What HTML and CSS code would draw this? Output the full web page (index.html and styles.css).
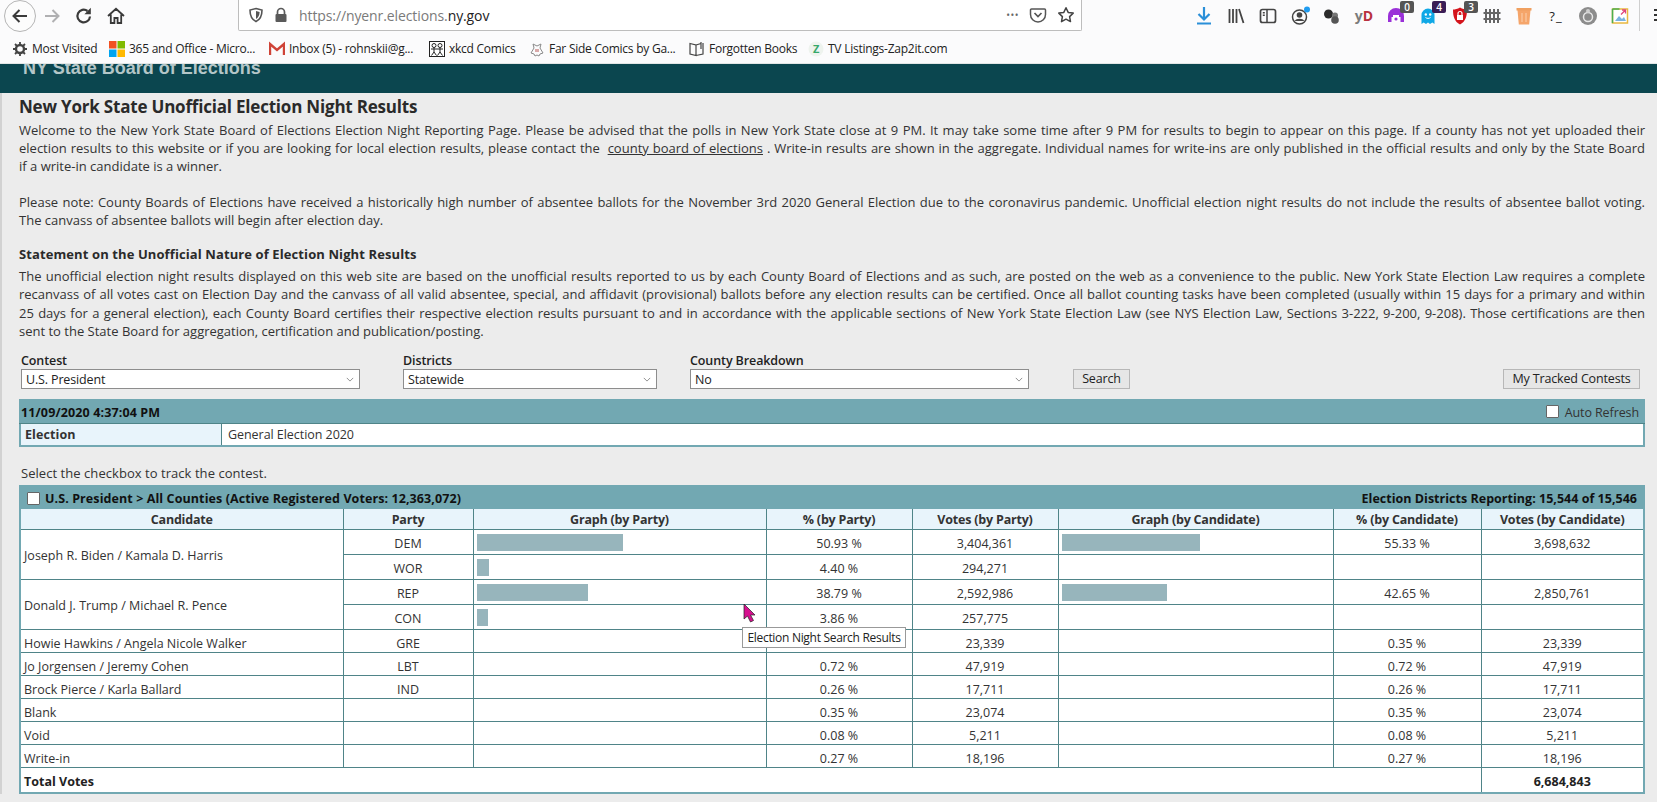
FILE: index.html
```html
<!DOCTYPE html>
<html lang="en">
<head>
<meta charset="utf-8">
<title>Election Night Search Results</title>
<link rel="stylesheet" href="styles.css">
</head>
<body>
<header class="chrome">
  <div class="toolbar">
    <button class="nav back"><svg viewBox="0 0 20 20" width="20" height="20"><path d="M17 10H4M9.5 4 3.5 10l6 6" fill="none" stroke="#3a3a3a" stroke-width="2"/></svg></button>
    <button class="nav"><svg viewBox="0 0 20 20" width="20" height="20"><path d="M3 10h13M10.500 4l6 6-6 6" fill="none" stroke="#b0b0b2" stroke-width="2"/></svg></button>
    <button class="nav"><svg viewBox="0 0 20 20" width="20" height="20"><path d="M16 10.500A6.300 6.300 0 1 1 13.500 5" fill="none" stroke="#3a3a3a" stroke-width="2.200"/><path d="M16.800 1.800v6.400h-6.400z" fill="#3a3a3a"/></svg></button>
    <button class="nav"><svg viewBox="0 0 20 20" width="20" height="20"><path d="M2 10 10 2.800 18 10M4.800 8.500V17h3.600v-5h3.200v5h3.600V8.500" fill="none" stroke="#3a3a3a" stroke-width="1.800"/></svg></button>
    <div class="urlbar">
      <svg class="shield" viewBox="0 0 16 16" width="16" height="16"><path d="M8 1.500 14 3c0 6-1.500 9.500-6 11.500C3.500 12.500 2 9 2 3z" fill="none" stroke="#555" stroke-width="1.600"/><path d="M8 4v8c2.500-1.500 3.500-4 3.600-7z" fill="#555"/></svg>
      <svg class="lock" viewBox="0 0 16 16" width="16" height="16"><path d="M4.500 7V5a3.500 3.500 0 0 1 7 0v2" fill="none" stroke="#5a5a5a" stroke-width="1.700"/><rect x="2.500" y="7" width="11" height="8" rx="1" fill="#5a5a5a"/></svg>
      <span class="url">https://nyenr.elections.<b>ny.gov</b></span>
      <span class="dots">•••</span>
      <svg viewBox="0 0 18 18" width="18" height="18"><path d="M2.500 3h13a1 1 0 0 1 1 1v4.500a7.500 7.500 0 0 1-15 0V4a1 1 0 0 1 1-1z" fill="none" stroke="#555" stroke-width="1.500"/><path d="M5.500 7 9 10.500 12.500 7" fill="none" stroke="#555" stroke-width="1.700"/></svg>
      <svg viewBox="0 0 18 18" width="18" height="18"><path d="m9 1.800 2.200 4.600 5 .7-3.600 3.500.9 5L9 13.200l-4.500 2.400.9-5L1.800 7.100l5-.7z" fill="none" stroke="#444" stroke-width="1.500" stroke-linejoin="round"/></svg>
    </div>
    <div class="addons">
      <span class="addon"><svg viewBox="0 0 20 20" width="20" height="20"><path d="M10 1v12M4.500 8 10 13.500 15.500 8M3 17.500h14" fill="none" stroke="#2a8fd8" stroke-width="2.200"/></svg></span>
      <span class="addon"><svg viewBox="0 0 20 20" width="20" height="20"><path d="M3.500 3v14M7 3v14M10.500 3v14M13 3l4.500 14" fill="none" stroke="#444" stroke-width="1.800"/></svg></span>
      <span class="addon"><svg viewBox="0 0 20 20" width="20" height="20"><rect x="2.500" y="3.500" width="15" height="13" rx="2" fill="none" stroke="#444" stroke-width="1.700"/><path d="M9 3.500v13M4.800 6.800h2M4.800 9.300h2" stroke="#444" stroke-width="1.500"/></svg></span>
      <span class="addon"><svg viewBox="0 0 20 20" width="20" height="20"><circle cx="9.500" cy="11" r="7" fill="none" stroke="#444" stroke-width="1.500"/><circle cx="9.500" cy="9" r="2.800" fill="#444"/><path d="M4.800 15c1-3 8.400-3 9.400 0z" fill="#444"/><circle cx="17" cy="3.500" r="3" fill="#1f9cf0"/></svg></span>
      <span class="addon"><svg viewBox="0 0 20 20" width="20" height="20"><circle cx="6.500" cy="8" r="4.500" fill="#2b2b2b"/><circle cx="13" cy="9.500" r="3" fill="#777"/><circle cx="13" cy="14" r="3.800" fill="#555"/></svg></span>
      <span class="addon yd"><span class="y">y</span><span class="d">D</span></span>
      <span class="addon"><svg viewBox="0 0 20 20" width="20" height="20"><path d="M2 16V10a8 8 0 0 1 16 0v6h-3.500v-5h-9v5z" fill="#9a30d8"/><path d="M7 9h6v4a3 3 0 0 1-6 0z" fill="#fff"/><circle cx="10" cy="13" r="1.600" fill="#9a30d8"/></svg><span class="badge">0</span></span>
      <span class="addon"><svg viewBox="0 0 20 20" width="20" height="20"><path d="M3.500 18V9a6.500 6.500 0 0 1 13 0v9l-2.200-1.500L12 18l-2-1.500L8 18l-2.300-1.500z" fill="#0fa8e6"/><circle cx="7.800" cy="8.500" r="1.200" fill="#fff"/><circle cx="12.200" cy="8.500" r="1.200" fill="#fff"/><path d="M7.500 11.500c1.500 1.200 3.500 1.200 5 0" fill="none" stroke="#fff"/></svg><span class="badge purple">4</span></span>
      <span class="addon"><svg viewBox="0 0 20 20" width="20" height="20"><path d="M10 1.500c2.500 1.500 5 2 7 2 0 7-1.500 12-7 15-5.500-3-7-8-7-15 2 0 4.500-.5 7-2z" fill="#d4141c"/><rect x="7" y="9" width="6" height="5" fill="#fff"/><path d="M8 9V7.500a2 2 0 0 1 4 0V9" fill="none" stroke="#fff" stroke-width="1.200"/></svg><span class="badge">3</span></span>
      <span class="addon"><svg viewBox="0 0 20 20" width="20" height="20"><path d="M4 3v14M8 3v14M12 3v14M16 3v14M1.500 7h17M1.500 13h17" fill="none" stroke="#666" stroke-width="2"/></svg></span>
      <span class="addon"><svg viewBox="0 0 20 20" width="20" height="20"><path d="M3.500 4h13l-1.300 14.500H4.800z" fill="#f5a56a"/><rect x="2.500" y="2" width="15" height="2.500" fill="#f0a060"/><path d="M8 7v9M12 7v9" stroke="#fbd0ae"/></svg></span>
      <span class="addon prompt">?_</span>
      <span class="addon"><svg viewBox="0 0 20 20" width="20" height="20"><circle cx="10" cy="10" r="9" fill="#8c8c8c"/><circle cx="10" cy="11" r="4.500" fill="none" stroke="#e8e8e8" stroke-width="1.500"/><circle cx="10" cy="5" r="2" fill="#d0d0d0"/></svg></span>
      <span class="addon"><svg viewBox="0 0 20 20" width="20" height="20"><rect x="2.500" y="3" width="15" height="14" fill="#fff" stroke="#e9b840" stroke-width="1.500"/><path d="M2.500 3h7M2.500 3v14" stroke="#4caf50" stroke-width="1.500"/><path d="m5 15 4-5 3 3 2-2 2 4z" fill="#7ab2e0"/><path d="M11 8.500 15.500 4M12 4h3.500v3.500" fill="none" stroke="#e0457b" stroke-width="1.300"/></svg></span>
    </div>
    <span class="sep"></span>
    <span class="menu"></span>
  </div>
  <nav class="bookmarks">
    <a class="bm"><svg viewBox="0 0 16 16" width="16" height="16"><circle cx="8" cy="8" r="4" fill="none" stroke="#444" stroke-width="2.400"/><path d="M8 1v3M8 12v3M1 8h3M12 8h3M3 3l2 2M11 11l2 2M13 3l-2 2M5 11l-2 2" stroke="#444" stroke-width="1.800"/></svg>Most Visited</a>
    <a class="bm"><svg viewBox="0 0 16 16" width="16" height="16"><rect width="7.500" height="7.500" fill="#f25022"/><rect x="8.500" width="7.500" height="7.500" fill="#7fba00"/><rect y="8.500" width="7.500" height="7.500" fill="#00a4ef"/><rect x="8.500" y="8.500" width="7.500" height="7.500" fill="#ffb900"/></svg>365 and Office - Micro...</a>
    <a class="bm"><svg viewBox="0 0 16 16" width="16" height="16"><path d="M1 14V3l7 6 7-6v11" fill="none" stroke="#cf4337" stroke-width="2.400"/></svg>Inbox (5) - rohnskii@g...</a>
    <a class="bm"><svg viewBox="0 0 16 16" width="16" height="16"><rect x=".5" y=".5" width="15" height="15" fill="#fff" stroke="#222"/><circle cx="5" cy="4.500" r="2" fill="none" stroke="#222"/><circle cx="11" cy="4.500" r="2" fill="none" stroke="#222"/><path d="M5 6.500V11L2.500 14.500M5 11l2.500 3.500M11 6.500V11L8.500 14.500M11 11l2.500 3.500M2 8h6M8 8h6" stroke="#222" fill="none"/></svg>xkcd Comics</a>
    <a class="bm"><svg viewBox="0 0 16 16" width="16" height="16"><path d="M4 3 8 5l4-2-1 4 3 5-3 1-1 2-2-1-2 1-1-2-3-1 3-5z" fill="none" stroke="#8a8a8a"/><path d="M6 8h4v3H6z" fill="#d9a9a9"/></svg>Far Side Comics by Ga...</a>
    <a class="bm"><svg viewBox="0 0 16 16" width="16" height="16"><path d="M1 2.500 7 4v10.500L1 13zM7 4l5-1.500M7 14.500l7-1.500V2M12 1v7" fill="none" stroke="#444" stroke-width="1.200"/></svg>Forgotten Books</a>
    <a class="bm"><svg viewBox="0 0 16 16" width="16" height="16"><circle cx="8" cy="8" r="7.500" fill="#eef3ee"/><text class="zlogo" x="8" y="12" text-anchor="middle">Z</text></svg>TV Listings-Zap2it.com</a>
  </nav>
</header>

<div class="banner"><h1>NY State Board of Elections</h1></div>

<main class="content">
  <h2 class="title">New York State Unofficial Election Night Results</h2>
  <p class="copy">
    <span class="line">Welcome to the New York State Board of Elections Election Night Reporting Page. Please be advised that the polls in New York State close at 9 PM. It may take some time after 9 PM for results to begin to appear on this page. If a county has not yet uploaded their</span>
    <span class="line">election results to this website or if you are looking for local election results, please contact the &nbsp;<a class="link">county board of elections</a> . Write-in results are shown in the aggregate. Individual names for write-ins are only published in the official results and only by the State Board</span>
    <span class="line end">if a write-in candidate is a winner.</span>
  </p>
  <p class="copy gap">
    <span class="line">Please note: County Boards of Elections have received a historically high number of absentee ballots for the November 3rd 2020 General Election due to the coronavirus pandemic. Unofficial election night results do not include the results of absentee ballot voting.</span>
    <span class="line end">The canvass of absentee ballots will begin after election day.</span>
  </p>
  <h3 class="subtitle">Statement on the Unofficial Nature of Election Night Results</h3>
  <p class="copy">
    <span class="line">The unofficial election night results displayed on this web site are based on the unofficial results reported to us by each County Board of Elections and as such, are posted on the web as a convenience to the public. New York State Election Law requires a complete</span>
    <span class="line">recanvass of all votes cast on Election Day and the canvass of all valid absentee, special, and affidavit (provisional) ballots before any election results can be certified. Once all ballot counting tasks have been completed (usually within 15 days for a primary and within</span>
    <span class="line">25 days for a general election), each County Board certifies their respective election results pursuant to and in accordance with the applicable sections of New York State Election Law (see NYS Election Law, Sections 3-222, 9-200, 9-208). Those certifications are then</span>
    <span class="line end">sent to the State Board for aggregation, certification and publication/posting.</span>
  </p>

  <form class="filters">
    <label class="field contest"><span class="field-label">Contest</span><span class="select"><span>U.S. President</span><svg viewBox="0 0 10 6" width="8" height="5"><path d="m1 1 4 4 4-4" fill="none" stroke="#777"/></svg></span></label>
    <label class="field district"><span class="field-label">Districts</span><span class="select"><span>Statewide</span><svg viewBox="0 0 10 6" width="8" height="5"><path d="m1 1 4 4 4-4" fill="none" stroke="#777"/></svg></span></label>
    <label class="field county"><span class="field-label">County Breakdown</span><span class="select"><span>No</span><svg viewBox="0 0 10 6" width="8" height="5"><path d="m1 1 4 4 4-4" fill="none" stroke="#777"/></svg></span></label>
    <button class="btn search" type="button">Search</button>
    <button class="btn tracked" type="button">My Tracked Contests</button>
  </form>

  <section class="panel">
    <div class="bar date"><b>11/09/2020 4:37:04 PM</b><span class="refresh"><span class="check"></span>Auto Refresh</span></div>
    <div class="election"><b class="election-key">Election</b><span class="election-val">General Election 2020</span></div>
  </section>

  <p class="hint">Select the checkbox to track the contest.</p>

  <section class="panel">
    <div class="bar results"><b class="contest-name"><span class="check"></span>U.S. President &gt; All Counties (Active Registered Voters: 12,363,072)</b><b class="reporting">Election Districts Reporting: 15,544 of 15,546</b></div>
    <table class="grid">
      <colgroup><col class="c1"><col class="c2"><col class="c3"><col class="c4"><col class="c5"><col class="c6"><col class="c7"><col class="c8"></colgroup>
      <thead>
        <tr><th>Candidate</th><th>Party</th><th>Graph (by Party)</th><th>% (by Party)</th><th>Votes (by Party)</th><th>Graph (by Candidate)</th><th>% (by Candidate)</th><th>Votes (by Candidate)</th></tr>
      </thead>
      <tbody>
        <tr class="tall"><td class="name" rowspan="2">Joseph R. Biden / Kamala D. Harris</td><td>DEM</td><td class="graph"><span class="gbar" style="width:146px"></span></td><td>50.93 %</td><td>3,404,361</td><td class="graph"><span class="gbar" style="width:138px"></span></td><td>55.33 %</td><td>3,698,632</td></tr>
        <tr class="tall"><td>WOR</td><td class="graph"><span class="gbar" style="width:12px"></span></td><td>4.40 %</td><td>294,271</td><td></td><td></td><td></td></tr>
        <tr class="tall"><td class="name" rowspan="2">Donald J. Trump / Michael R. Pence</td><td>REP</td><td class="graph"><span class="gbar" style="width:111px"></span></td><td>38.79 %</td><td>2,592,986</td><td class="graph"><span class="gbar" style="width:105px"></span></td><td>42.65 %</td><td>2,850,761</td></tr>
        <tr class="tall"><td>CON</td><td class="graph"><span class="gbar" style="width:11px"></span></td><td>3.86 %</td><td>257,775</td><td></td><td></td><td></td></tr>
        <tr class="plain"><td class="name">Howie Hawkins / Angela Nicole Walker</td><td>GRE</td><td></td><td>0.35 %</td><td>23,339</td><td></td><td>0.35 %</td><td>23,339</td></tr>
        <tr class="plain"><td class="name">Jo Jorgensen / Jeremy Cohen</td><td>LBT</td><td></td><td>0.72 %</td><td>47,919</td><td></td><td>0.72 %</td><td>47,919</td></tr>
        <tr class="plain"><td class="name">Brock Pierce / Karla Ballard</td><td>IND</td><td></td><td>0.26 %</td><td>17,711</td><td></td><td>0.26 %</td><td>17,711</td></tr>
        <tr class="plain"><td class="name">Blank</td><td></td><td></td><td>0.35 %</td><td>23,074</td><td></td><td>0.35 %</td><td>23,074</td></tr>
        <tr class="plain"><td class="name">Void</td><td></td><td></td><td>0.08 %</td><td>5,211</td><td></td><td>0.08 %</td><td>5,211</td></tr>
        <tr class="plain"><td class="name">Write-in</td><td></td><td></td><td>0.27 %</td><td>18,196</td><td></td><td>0.27 %</td><td>18,196</td></tr>
      </tbody>
      <tfoot>
        <tr class="total"><td class="name" colspan="7">Total Votes</td><td>6,684,843</td></tr>
      </tfoot>
    </table>
  </section>
</main>

<svg class="cursor" viewBox="0 0 14 20" width="14" height="20"><path d="M1 1v15l3.500-3 3 6 3-1.500-3-5.500H12z" fill="#d6108f" stroke="#222" stroke-width=".7"/></svg>
<div class="tooltip">Election Night Search Results</div>
</body>
</html>
```
FILE: styles.css
```css
* { box-sizing: border-box; }
html, body { margin: 0; padding: 0; }
body {
  position: relative;
  height: 802px;
  overflow: hidden;
  background: #ececec;
  color: #333;
  font-family: "Open Sans", "Noto Sans", sans-serif;
  font-size: 12.5px;
}

/* browser chrome */
.chrome { background: #fbfbfc; height: 64px; color: #222; }
.toolbar { display: flex; align-items: center; height: 31px; padding-left: 4px; position: relative; }
.nav {
  width: 32px; height: 32px; flex: none; padding: 0;
  display: flex; align-items: center; justify-content: center;
  background: none; border: 0; border-radius: 50%;
}
.nav.back { border: 1px solid #b5b5b5; background: #fcfcfc; }
.urlbar {
  margin-left: 106px; width: 844px; height: 31px; flex: none; align-self: flex-start;
  display: flex; align-items: center; gap: 10px;
  background: #fff; border: 1px solid #bdbdbd; border-top: 0; border-radius: 0 0 2px 2px;
  padding: 0 6px 0 9px;
}
.shield { margin-right: -1px; }
.url { flex: 1; color: #7a7a7a; font-size: 14px; letter-spacing: -.1px; }
.url b { font-weight: 400; color: #222; }
.dots { color: #666; font-size: 10px; letter-spacing: .5px; }
.addons { display: flex; margin-left: auto; margin-right: 21px; }
.addon { width: 32px; height: 31px; position: relative; display: flex; align-items: center; justify-content: center; }
.yd { font-weight: 700; font-size: 14px; }
.yd .y { color: #7b7b7b; }
.yd .d { color: #b8323f; }
.prompt { font-size: 13px; color: #222; letter-spacing: 1px; }
.badge {
  position: absolute; top: 1px; left: 20px; min-width: 14px; height: 12px;
  background: #555; color: #fff; font-size: 10px; font-weight: 600; line-height: 12px; text-align: center;
  border-radius: 2px;
}
.badge.purple { background: #3a1d55; }
.sep { width: 1px; height: 31px; background: #cfcfcf; position: absolute; left: 1639px; top: 0; }
.menu { position: absolute; left: 1654px; top: 9px; width: 3px; height: 13px; background: repeating-linear-gradient(#333 0 2px, transparent 2px 5px); }
.bookmarks {
  display: grid; grid-template-columns: 97px 160px 160px 100px 160px 119px auto;
  height: 33px; align-items: center; padding: 3px 0 0 12px; font-size: 12px; letter-spacing: -.25px;
  border-bottom: 1px solid #e2e6e6;
}
.bm { display: flex; align-items: center; gap: 4px; white-space: nowrap; }
.bm svg { flex: none; }
.zlogo { font: 700 11px "Open Sans", sans-serif; fill: #35a86a; }

/* page */
.banner { height: 29px; background: #0b464f; overflow: hidden; padding-left: 23px; }
.banner h1 { margin: 0; font: 700 18px/8px "Liberation Sans", Arial, sans-serif; color: #b4c6c8; }
.content { border-left: 2px solid #d2d2d2; padding: 4px 12px 0 17px; }
.title { margin: 0 0 3.5px; font-size: 17px; line-height: 20px; font-weight: 700; color: #2a2a2a; letter-spacing: -.2px; }
.copy { margin: 0; font-size: 13px; line-height: 18.4px; }
.copy.gap { margin-top: 17px; }
.line { display: block; text-align: justify; text-align-last: justify; white-space: nowrap; }
.line.end { text-align-last: left; }
.link { text-decoration: underline; }
.subtitle { margin: 15.5px 0 4px; font-size: 13px; line-height: 18px; font-weight: 700; color: #2a2a2a; letter-spacing: .1px; }

.filters { display: flex; align-items: flex-end; margin-top: 11px; }
.field { display: flex; flex-direction: column; flex: none; }
.contest { width: 339px; margin-left: 2px; }
.district { width: 254px; margin-left: 43px; }
.county { width: 339px; margin-left: 33px; }
.field-label { font-weight: 600; line-height: 17px; color: #222; letter-spacing: -.1px; }
.select {
  display: flex; align-items: center; justify-content: space-between;
  height: 20px; padding: 1px 5px 0 4px; background: #fff; border: 1px solid #8d8d8d; color: #222; letter-spacing: -.15px;
}
.btn {
  height: 20px; padding: 0; background: #e6e6e6; border: 1px solid #b7b7b7; color: #222;
  font: inherit; letter-spacing: -.15px;
}
.search { width: 57px; margin-left: 44px; }
.tracked { width: 137px; margin-left: auto; margin-right: 5px; }

.panel { background: #fff; border: 2px solid #72a8b2; border-top: 0; }
.filters + .panel { margin-top: 10px; }
.bar { display: flex; align-items: center; justify-content: space-between; background: #72a8b2; color: #111; padding: 3px 4px 0 0; letter-spacing: -.1px; }
.bar b { font-weight: 700; letter-spacing: .13px; }
.bar b.contest-name { letter-spacing: .09px; }
.bar b.reporting { letter-spacing: .02px; }
.date { height: 25px; margin: 0 -2px; padding: 3px 6px 0 2px; border-bottom: 1px solid #4f8488; }
.refresh { display: flex; align-items: center; gap: 6px; color: #333; }
.check { display: inline-block; width: 13px; height: 13px; background: #fff; border: 1px solid #666; border-radius: 1px; vertical-align: -2px; }
.date .check { margin: -2px 0 0; }
.election { display: flex; height: 21px; align-items: center; }
.election-key { width: 201px; height: 100%; display: flex; align-items: center; padding-left: 4px; background: #e8f4fb; border-right: 1px solid #4f8488; color: #333; letter-spacing: .1px; }
.election-val { padding-left: 6px; letter-spacing: -.05px; }
.hint { margin: 0; padding: 17px 0 0 2px; height: 38px; font-size: 13px; line-height: 18px; letter-spacing: .05px; }
.results { height: 24px; margin: 0 -2px; padding: 3px 8px 0 8px; }
.contest-name .check { margin-right: 5px; }

.grid { width: 100%; border-collapse: collapse; table-layout: fixed; }
.c1 { width: 322px; } .c2 { width: 130px; } .c3 { width: 293px; } .c4 { width: 146px; }
.c5 { width: 146px; } .c6 { width: 275px; } .c7 { width: 148px; } .c8 { width: 162px; }
.grid th, .grid td { border: 1px solid #4f8488; padding: 2px 0 0; text-align: center; }
.grid tr > :first-child { border-left: 0; }
.grid tr > :last-child { border-right: 0; }
.grid tfoot td { border-bottom: 0; }
.grid thead th { border-top: 0; }
.grid th { height: 21px; padding-top: 1px; background: #e8f4fb; color: #333; font-weight: 700; letter-spacing: -.2px; }
.grid tbody tr { height: 23px; }
.grid tbody tr.tall { height: 25px; }
.grid tr.plain td, .grid tr.total td { padding-top: 4px; }
.grid td.name { text-align: left; padding-left: 3px; }
.grid td.graph { padding: 0 3px; text-align: left; vertical-align: middle; }
.gbar { display: block; height: 17px; background: #97b5bc; }
.total { height: 24px; font-weight: 700; color: #222; }

.cursor { position: absolute; left: 743px; top: 603px; }
.tooltip {
  position: absolute; left: 742px; top: 627px; width: 164px; height: 21px;
  background: #fff; border: 1px solid #999; color: #222; font-size: 12px; letter-spacing: -.3px;
  display: flex; align-items: center; justify-content: center; white-space: nowrap;
}
```
